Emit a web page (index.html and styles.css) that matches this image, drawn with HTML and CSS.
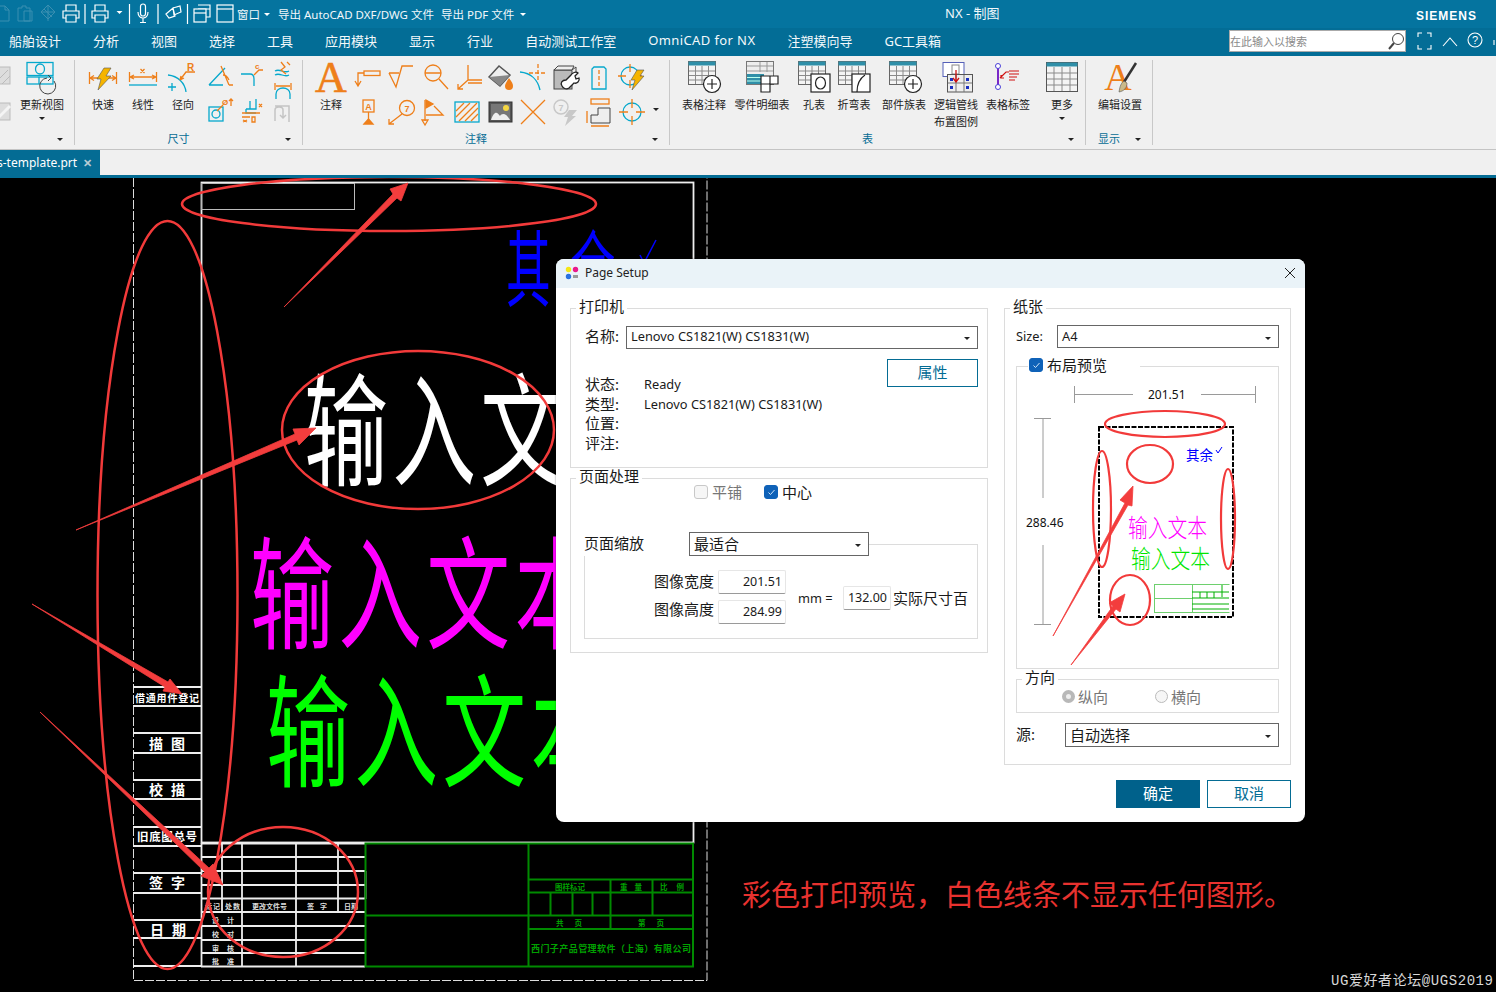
FILE: index.html
```html
<!DOCTYPE html>
<html lang="zh-CN">
<head>
<meta charset="utf-8">
<title>NX - 制图</title>
<link rel="stylesheet" href="styles.css">
</head>
<body>
<svg class="defs" width="0" height="0" aria-hidden="true">
  <symbol id="tbl" viewBox="0 0 28 24">
    <rect x=".5" y=".5" width="27" height="23" fill="#f4f4f4" stroke="#666"/>
    <rect x=".5" y=".5" width="27" height="4" fill="#2f8fa8"/>
    <path d="M7.5 5v18M14 5v18M20.5 5v18M1 10h26M1 14.500h26M1 19h26" stroke="#8a8a8a" fill="none"/>
  </symbol>
</svg>

<header class="titlebar">
  <div class="qat">
    <svg class="qat-icons" width="234" height="28" viewBox="0 0 234 28">
      <g class="q-faded">
        <path d="M-2 6h7l4 4v11H-2zM5 6v4h4"/>
        <path d="M18 8h4v-2h4v2h4v13H18zM24 11h8v10h-8z"/>
        <path d="M48 5l7 7-7 7-7-7zM44 9l8 8M48 5v16M41 12h14"/>
      </g>
      <g class="q-line">
        <path d="M66 11V5h10v6M66 18h-3v-7h16v7h-3M66 15h10v7H66z"/>
        <path d="M85 4v20M129.500 4v20M158 4v20M187.500 4v20"/>
        <path d="M95 11V5h10v6M95 18h-3v-7h16v7h-3M95 15h10v7H95z"/>
        <rect x="140.500" y="4" width="5" height="12" rx="2.500"/>
        <path d="M138 12c0 8 10 8 10 0M143 18v4M140 22.500h6"/>
        <path d="M173 8l7-2 1 6-7 3zM166 14l7-6 2 8-6 2z"/>
        <path d="M198 5h12v12h-4M198 9h12"/>
        <rect x="194" y="9" width="12" height="13" fill="#05749f"/>
        <path d="M194 13h12"/>
        <rect x="217" y="5" width="16" height="17"/>
        <path d="M217 9h16"/>
      </g>
      <path class="q-fill" d="M116.500 11h6l-3 3z"/>
    </svg>
    <span class="qat-text">窗口</span><i class="caret caret-w"></i>
    <span class="qat-text qat-export">导出 AutoCAD DXF/DWG 文件</span>
    <span class="qat-text qat-export2">导出 PDF 文件</span><i class="caret caret-w caret-lined"></i>
  </div>
  <div class="app-title">NX - 制图</div>
  <div class="brand">SIEMENS</div>
</header>

<nav class="menubar">
  <span>船舶设计</span><span>分析</span><span>视图</span><span>选择</span><span>工具</span><span>应用模块</span><span>显示</span><span>行业</span><span>自动测试工作室</span><span class="menu-latin">OmniCAD for NX</span><span>注塑模向导</span><span>GC工具箱</span>
  <div class="searchbox">
    <span class="search-hint">在此输入以搜索</span>
    <svg width="18" height="20" viewBox="0 0 18 20"><circle cx="11" cy="8" r="5.500" fill="none" stroke="#444"/><path d="M7 12l-5 6" stroke="#444" stroke-width="2"/></svg>
  </div>
  <svg class="menu-tools" width="80" height="28" viewBox="0 0 80 28">
    <path d="M2 10V6h4M11 6h4v4M2 18v4h4M11 22h4v-4M27 19l7-8 7 8"/>
    <circle cx="59" cy="13" r="7"/>
    <text x="59" y="17" class="help">?</text>
    <path d="M78 18v-5"/>
  </svg>
</nav>

<section class="ribbon">
  <div class="group g0">
    <div class="group-body">
      <div class="faded-col">
        <svg width="14" height="20" viewBox="0 0 14 20"><rect x="-6" y="1" width="16" height="17" fill="#ddd" stroke="#bbb"/><path d="M-2 14L8 4M2 18L10 10" stroke="#bbb" fill="none"/></svg>
        <svg width="14" height="20" viewBox="0 0 14 20"><rect x="-6" y="1" width="16" height="17" fill="#ddd" stroke="#bbb"/><path d="M-2 16L10 4" stroke="#f4f4f4" stroke-width="3" fill="none"/></svg>
      </div>
      <div class="tool w52">
        <svg class="ic" viewBox="0 0 36 36">
          <g class="c"><rect x="3" y="2.500" width="26" height="13"/><ellipse cx="16" cy="9" rx="4.500" ry="5"/><rect x="3" y="17" width="26" height="7"/><path d="M15 17v7"/></g>
          <path d="M30 21a8 8 0 1 1-7-3" fill="none" stroke="#444"/><path d="M24 15l3 3-3 3" fill="none" stroke="#444"/>
        </svg>
        <span class="lbl">更新视图</span><i class="caret"></i>
      </div>
    </div>
    <div class="group-foot"><span></span><i class="caret"></i></div>
  </div>

  <div class="group g1">
    <div class="group-body">
      <div class="tool w40">
        <svg class="ic" viewBox="0 0 36 36">
          <g class="o"><path d="M4.500 12v12M31.500 12v12M5 18h26M5 18l4-2.500M5 18l4 2.500M31 18l-4-2.500M31 18l-4 2.500"/></g>
          <path class="bolt" d="M19 8h7l-5 8h5L13 30l3-11h-4z"/>
        </svg>
        <span class="lbl">快速</span>
      </div>
      <div class="tool w40">
        <svg class="ic" viewBox="0 0 36 36">
          <g class="o"><path d="M4.500 12v10M31.500 12v10M5 17h26M5 17l4-2M5 17l4 2M31 17l-4-2M31 17l-4 2M15.500 9l4 4M19.500 9l-4 4"/></g>
          <path class="c" d="M4 25h28" />
        </svg>
        <span class="lbl">线性</span>
      </div>
      <div class="tool w40">
        <svg class="ic" viewBox="0 0 36 36">
          <path class="c" d="M3 15c10 1 17 8 18 17M7 23v8M3 27h8"/>
          <g class="o"><path d="M15 20l6-8h9M15 20l1-4M15 20l4-2"/></g>
          <text x="22" y="11" class="t-o">R</text>
        </svg>
        <span class="lbl">径向</span>
      </div>
      <div class="stack s1">
        <svg width="28" height="30" viewBox="0 0 28 30"><path class="c" d="M2 24L18 7M2 24h14"/><path class="o" d="M14 5l8 19M22 24h4M16 14c3 0 5 3 6 5"/></svg>
        <svg width="28" height="26" viewBox="0 0 28 26"><rect class="c" x="2" y="10" width="14" height="14"/><circle class="c" cx="9" cy="17" r="4"/><path class="o" d="M10 14l6-6M24 2v7M22 4l2-2 2 2"/><text x="15" y="8" class="t-o t-s">Ø</text></svg>
      </div>
      <div class="stack s2">
        <svg width="24" height="30" viewBox="0 0 24 30"><path class="c" d="M1 13h9c3 0 4 2 4 5v7"/><path class="o" d="M14 14l5-5h4"/><text x="15" y="8" class="t-o t-s">c</text></svg>
        <svg width="24" height="26" viewBox="0 0 24 26"><path class="c" d="M6 12h10v-10M6 12v4h10M10 4v8"/><path class="o" d="M2 16h18M2 20h8M3 23l4 2M7 23l-4 2M12 20h3v5h-3zM19 7l3 3M22 7l-3 3"/></svg>
      </div>
      <div class="stack s3">
        <svg width="22" height="22" viewBox="0 0 22 22"><path class="c" d="M3 12c5-3 9 3 14 0M3 16c5-3 9 3 14 0"/><path class="o" d="M9 3l4 5-4 3 5 4M15 3l3 3"/></svg>
        <svg width="22" height="22" viewBox="0 0 22 22"><path class="c" d="M4 18v-5c0-8 14-8 14 0v5"/><path class="o" d="M3 2v7M19 2v7M4 5h14"/></svg>
        <svg width="22" height="22" viewBox="0 0 22 22"><path d="M3 18V7c0-4 8-4 8 0v8M8 12l3 3 3-3M3 3h14v16" fill="none" stroke="#c4c4c4" stroke-width="1.500"/></svg>
      </div>
    </div>
    <div class="group-foot"><span class="foot-label">尺寸</span><i class="caret"></i></div>
  </div>

  <div class="group g2">
    <div class="group-body">
      <div class="tool w40">
        <svg class="ic" viewBox="0 0 36 36"><text x="18" y="32" class="big-a">A</text></svg>
        <span class="lbl">注释</span>
      </div>
      <div class="ann-grid">
        <svg viewBox="0 0 30 30"><g class="o"><rect x="11" y="9" width="16" height="4.500"/><path d="M11 11H5v12M2 19l3 5 3-5"/></g></svg>
        <svg viewBox="0 0 30 30"><g class="o"><path d="M3 11h10M3 11l7 14 6-21h11"/></g></svg>
        <svg viewBox="0 0 30 30"><g class="o"><circle cx="14" cy="11" r="8"/><path d="M6 11h16M20 17l9 10"/></g></svg>
        <svg viewBox="0 0 30 30"><g class="o"><path d="M16 3v15h14M16 21h14M16 18L6 27M6 22v5h5"/></g></svg>
        <svg viewBox="0 0 30 30"><path d="M4 15L14 4l11 9-10 11z" fill="#eee" stroke="#555" stroke-width="1.500"/><path d="M4 15l11 9 10-11z" fill="#888"/><path d="M24 16c3 4 4 6 4 8a4 4 0 0 1-8 0c0-2 2-5 4-8z" fill="#ee7f1a"/></svg>
        <svg viewBox="0 0 30 30"><path class="c" d="M2 10c11 1 18 8 20 18"/><path class="o od" d="M20 2v18M11 11h18"/></svg>
        <svg viewBox="0 0 30 30"><rect x="3" y="8" width="18" height="19" fill="#bbb" stroke="#444"/><path d="M3 8l4-4h16l-2 4zM21 8l4-3v6" fill="#eee" stroke="#444"/><path d="M11 24c-2-3 0-6 4-6l5-5c1-2 5-4 7-2l-3 3 1 3 3-1c1 3-2 6-5 5l-5 5c-3 2-6 0-7-2z" fill="#fff" stroke="#222" stroke-width="1.300"/></svg>
        <svg viewBox="0 0 30 30"><path class="c" d="M10 5h10l2 2v20H8V7z"/><path class="o od" d="M15 8v18"/></svg>
        <svg viewBox="0 0 30 30"><circle class="c" cx="13" cy="14" r="9"/><path class="o" d="M13 2v8M13 18v8M1 14h8M17 14h8"/><path class="bolt" d="M20 8h7l-4 6h4L15 28l3-10h-4z"/></svg>

        <svg viewBox="0 0 30 30"><g class="o"><rect x="10" y="3" width="11" height="12"/><path d="M15.500 15v10"/><path d="M11 27l4.500-5 4.500 5z" fill="#ee7f1a"/></g><text x="15.500" y="12.500" class="t-o t-m">A</text></svg>
        <svg viewBox="0 0 30 30"><g class="o"><circle cx="21" cy="11" r="7.500"/><path d="M16 17L3 27M3 22v5h5"/></g><text x="21" y="15" class="t-o t-m">7</text></svg>
        <svg viewBox="0 0 30 30"><g class="o"><path d="M6 3v21M6 28l-3-5h6z"/><path d="M7 3l7 4-7 4z" fill="#ee7f1a"/><path d="M15 9l9 9H7"/></g></svg>
        <svg viewBox="0 0 30 30"><rect class="c" x="3" y="5" width="24" height="20"/><path class="o" d="M4 14l8-8M4 20l14-14M7 24L25 6M13 24l13-13M19 24l7-7"/></svg>
        <svg viewBox="0 0 30 30"><rect x="4" y="5" width="23" height="20" fill="#555" stroke="#333"/><rect x="6" y="7" width="19" height="16" fill="#777"/><circle cx="21" cy="11" r="3" fill="#f5d742"/><path d="M6 23c3-9 6-9 9-4 2-3 6-3 10 4z" fill="#eee"/></svg>
        <svg viewBox="0 0 30 30"><path class="o" d="M3 3l24 24M27 3L3 27"/></svg>
        <svg viewBox="0 0 30 30"><circle cx="10" cy="10" r="7" fill="none" stroke="#c8c8c8" stroke-width="1.500"/><text x="10" y="14" class="t-g">7</text><path d="M18 13h8l-5 6h4L14 29l3-9h-4z" fill="#c8c8c8"/></svg>
        <svg viewBox="0 0 30 30"><rect class="o" x="7" y="2" width="18" height="5"/><path d="M14 11h12v15H7v-8h7z" fill="#eee" stroke="#444"/><path class="o" d="M3 14v12M7 29h18"/></svg>
        <svg viewBox="0 0 30 30"><circle class="c" cx="15" cy="15" r="9"/><path class="o" d="M15 2v9M15 19v9M2 15h9M19 15h9"/></svg>
      </div>
      <i class="caret caret-more"></i>
    </div>
    <div class="group-foot"><span class="foot-label">注释</span><i class="caret"></i></div>
  </div>

  <div class="group g3">
    <div class="group-body">
      <div class="tool w52">
        <svg class="ic" viewBox="0 0 36 36"><use href="#tbl" x="2" y="1" width="28" height="24"/><circle class="k" cx="26" cy="24" r="8.500"/><path class="kp" d="M26 19v10M21 24h10"/></svg>
        <span class="lbl">表格注释</span>
      </div>
      <div class="tool w64">
        <svg class="ic" viewBox="0 0 36 36"><rect x="2.500" y="1.500" width="27" height="23" fill="#eee" stroke="#777"/><path d="M3 6h26M3 11h26M16 2v10M23 2v10" stroke="#999"/><rect x="3" y="14" width="17" height="10" fill="#2f8fa8"/><path d="M3 17.500h17M3 21h17" stroke="#bfe"/><path class="k" d="M17 16h17v8h-8v8h-9z"/><path class="kp" d="M26 16v8H17"/></svg>
        <span class="lbl">零件明细表</span>
      </div>
      <div class="tool w40">
        <svg class="ic" viewBox="0 0 36 36"><use href="#tbl" x="2" y="1" width="28" height="24"/><rect class="k" x="15" y="14" width="19" height="18"/><ellipse class="kp" cx="24.500" cy="23" rx="5" ry="6"/></svg>
        <span class="lbl">孔表</span>
      </div>
      <div class="tool w40">
        <svg class="ic" viewBox="0 0 36 36"><use href="#tbl" x="2" y="1" width="28" height="24"/><rect class="k" x="16" y="14" width="18" height="18"/><path class="kp" d="M21 32c0-8 2-13 8-17"/></svg>
        <span class="lbl">折弯表</span>
      </div>
      <div class="tool w60">
        <svg class="ic" viewBox="0 0 36 36"><use href="#tbl" x="3" y="1" width="28" height="24"/><circle class="k" cx="27" cy="24" r="8.500"/><path class="kp" d="M27 19v10M22 24h10"/></svg>
        <span class="lbl">部件族表</span>
      </div>
      <div class="tool w44">
        <svg class="ic" viewBox="0 0 36 36"><rect x="5" y="2.500" width="21" height="14" fill="#fff" stroke="#5560b8"/><rect x="14" y="5" width="7" height="9" fill="#fff" stroke="#888"/><rect x="9.500" y="14.500" width="25" height="17.500" fill="#eee" stroke="#555"/><path d="M18 15v17M26 15v17M10 23h24" stroke="#777"/><path d="M12 18h3v3h-3zM28 18h3v3h-3zM12 26h3v3h-3zM28 26h3v3h-3z" fill="#1a2fc0"/><path d="M18 10v11M15 18l3 4 3-4" fill="none" stroke="#d01010" stroke-width="1.300"/></svg>
        <span class="lbl">逻辑管线<br>布置图例</span>
      </div>
      <div class="tool w60">
        <svg class="ic" viewBox="0 0 36 36"><path d="M8 6v21" stroke="#7a28c8" stroke-width="2"/><circle cx="8" cy="6" r="2.500" fill="#fff" stroke="#4a40d8"/><circle cx="8" cy="27" r="2.500" fill="#fff" stroke="#4a40d8"/><path d="M10 18l6-6h3M11 15v3h3M19 11h10M19 14h10M19 17h8M19 20h6" fill="none" stroke="#d01010" stroke-width="1.200"/></svg>
        <span class="lbl">表格标签</span>
      </div>
      <div class="tool w48">
        <svg class="ic" viewBox="0 0 36 36"><rect x="2.500" y="2.500" width="31" height="29" fill="#f4f4f4" stroke="#555"/><rect x="2.500" y="2.500" width="31" height="4" fill="#2f8fa8"/><path d="M10 7v24M18 7v24M26 7v24M3 13h30M3 19h30M3 25h30" stroke="#8a8a8a"/></svg>
        <span class="lbl">更多</span><i class="caret"></i>
      </div>
    </div>
    <div class="group-foot"><span class="foot-label">表</span><i class="caret"></i></div>
  </div>

  <div class="group g4">
    <div class="group-body">
      <div class="tool w60">
        <svg class="ic" viewBox="0 0 36 36"><text x="16" y="30" class="big-a big-b">A</text><path d="M34 3L22 22" stroke="#333" stroke-width="2.500"/><path d="M22 21c-3 2-4 5-5 11 5-1 8-4 8-9z" fill="#c9b98a" stroke="#555" stroke-width=".6"/></svg>
        <span class="lbl">编辑设置</span>
      </div>
    </div>
    <div class="group-foot"><span class="foot-label">显示</span><i class="caret"></i></div>
  </div>
</section>

<div class="tabbar">
  <div class="tab"><span class="tab-name">s-template.prt</span><span class="tab-x">✕</span></div>
</div>
<div class="tabline"></div>

<main class="canvas">
  <svg class="drawing" width="1496" height="814" viewBox="0 178 1496 814">
    <path class="dash" d="M133.500 178V980.500H707V178"/>
    <g class="sheet">
      <rect x="201.500" y="182.500" width="492" height="660"/>
      <path d="M201.500 843V967"/>
      <rect class="thin" x="201.500" y="183.500" width="153" height="26"/>
      <path d="M133 687h68M133 706h68M133 733h68M133 753h68M133 780h68M133 799h68M133 827h68M133 846h68M133 873h68M133 893h68M133 920h68M133 938h68M133 966h68"/>
      <path d="M201 843.500h164.500M201 857h164M201 871h164.500M201 885h164.500M201 898.500h164.500M201 912h164M201 926h164M201 940h164M201 953h164M201 966.500h164M222 843v69M242 843v123M296 843v123M338 843v69M365.500 871v28"/>
    </g>
    <g class="sheet-text">
      <text class="st-xs" x="135" y="702" textLength="64" lengthAdjust="spacing">借通用件登记</text>
      <text x="149" y="749" textLength="36" lengthAdjust="spacing">描图</text>
      <text x="149" y="795" textLength="36" lengthAdjust="spacing">校描</text>
      <text class="st-s" x="137" y="841" textLength="60" lengthAdjust="spacing">旧底图总号</text>
      <text x="149" y="888" textLength="36" lengthAdjust="spacing">签字</text>
      <text x="150" y="935" textLength="36" lengthAdjust="spacing">日期</text>
    </g>
    <g class="sheet-small">
      <text x="205" y="909" textLength="15" lengthAdjust="spacing">标记</text><text x="225" y="909" textLength="15" lengthAdjust="spacing">处数</text><text x="252" y="909" textLength="35" lengthAdjust="spacing">更改文件号</text><text x="307" y="909" textLength="20" lengthAdjust="spacing">签字</text><text x="344" y="909" textLength="14" lengthAdjust="spacing">日期</text>
      <text x="212" y="923" textLength="22" lengthAdjust="spacing">设计</text><text x="212" y="937" textLength="22" lengthAdjust="spacing">校对</text><text x="212" y="951" textLength="22" lengthAdjust="spacing">审核</text><text x="212" y="964" textLength="22" lengthAdjust="spacing">批准</text>
    </g>
    <g class="gsheet">
      <rect x="365.500" y="843.500" width="327.500" height="123"/>
      <path d="M528.500 843v123M365 915.500h328M528 879.500h165M528 892.500h165M528 929h165M610.500 879v50M652.500 879v36M550.500 892v23M572.500 892v23M592.500 892v23"/>
    </g>
    <g class="gsheet-text">
      <text x="555" y="890" textLength="30" lengthAdjust="spacing">图样标记</text><text x="620" y="890" textLength="22" lengthAdjust="spacing">重量</text><text x="660" y="890" textLength="24" lengthAdjust="spacing">比例</text>
      <text x="556" y="926" textLength="26" lengthAdjust="spacing">共页</text><text x="638" y="926" textLength="26" lengthAdjust="spacing">第页</text>
      <text x="531" y="952" textLength="160" lengthAdjust="spacing" class="gbold">西门子产品管理软件（上海）有限公司</text>
    </g>
    <text class="bigtxt blue" transform="translate(506 300) scale(.62 1.16)" font-size="72" letter-spacing="32">其余</text>
    <path class="bluecheck" d="M640 255l4 8 12-23"/>
    <text class="bigtxt white" transform="translate(304 475.500) scale(.84 1.22)" font-size="100" letter-spacing="5">输入文本</text>
    <text class="bigtxt magenta" transform="translate(250 638.500) scale(.84 1.22)" font-size="100" letter-spacing="5">输入文本</text>
    <text class="bigtxt green" transform="translate(266 776.500) scale(.84 1.22)" font-size="100" letter-spacing="5">输入文本</text>
    <g class="red-ring">
      <ellipse cx="389" cy="204" rx="207" ry="27"/>
      <ellipse cx="167.500" cy="595" rx="70" ry="374"/>
      <ellipse cx="418" cy="430" rx="136" ry="79"/>
      <ellipse cx="283" cy="892" rx="75" ry="65"/>
    </g>
    <g class="red-arrow">
      <polygon points="284,307 393,194 390,189 408,183 401,201 397,198"/>
      <polygon points="76,530 295,434 293,429 316,428 299,445 297,440"/>
      <polygon points="32,604 168,682 170,679 182,694 163,691 165,687"/>
      <polygon points="40,712 209,868 213,864 223,885 201,876 205,872"/>
    </g>
    <text class="caption" x="742" y="906" textLength="551" lengthAdjust="spacing">彩色打印预览，白色线条不显示任何图形。</text>
    <text class="wm" x="1331" y="985" textLength="162">UG爱好者论坛@UGS2019</text>
  </svg>

  <section class="dialog">
    <div class="dlg-title">
      <svg width="14" height="14" viewBox="0 0 14 14"><circle cx="3.500" cy="3.500" r="2.700" fill="#f5e616"/><circle cx="10.500" cy="3.500" r="2.700" fill="#ea1a8c"/><circle cx="3.500" cy="10.500" r="2.700" fill="#2a72e0"/><rect x="8" y="9" width="5" height="3" fill="#999"/></svg>
      <span class="dlg-name">Page Setup</span>
      <svg class="dlg-close" width="12" height="12" viewBox="0 0 12 12"><path d="M1 1l10 10M11 1L1 11" stroke="#222" fill="none"/></svg>
    </div>
    <div class="dlg-body">
      <div class="col-left">
        <fieldset class="fs fs-printer">
          <legend>打印机</legend>
          <div class="row">
            <label class="row-label">名称:</label>
            <div class="select sel-printer"><span>Lenovo CS1821(W) CS1831(W)</span><i class="caret"></i></div>
          </div>
          <div class="printer-info">
            <dl class="info">
              <dt>状态:</dt><dd>Ready</dd>
              <dt>类型:</dt><dd>Lenovo CS1821(W) CS1831(W)</dd>
              <dt>位置:</dt><dd></dd>
              <dt>评注:</dt><dd></dd>
            </dl>
            <button class="btn btn-outline btn-prop" type="button">属性</button>
          </div>
        </fieldset>
        <fieldset class="fs fs-page">
          <legend>页面处理</legend>
          <div class="checks">
            <label class="check check-off"><i class="box"></i>平铺</label>
            <label class="check"><i class="box on"><svg width="9" height="9" viewBox="0 0 9 9"><path d="M1.500 4.500l2 2 4-4.500" fill="none" stroke="#cfe3f7"/></svg></i>中心</label>
          </div>
          <fieldset class="fs fs-scale">
            <legend class="scale-legend"><span class="scale-name">页面缩放</span><div class="select sel-scale"><span>最适合</span><i class="caret"></i></div></legend>
            <div class="scale-body">
              <div class="size-grid">
                <span class="lab-w">图像宽度</span><div class="numbox nb-wide">201.51</div>
                <span class="lab-h">图像高度</span><div class="numbox nb-wide">284.99</div>
              </div>
              <div class="pct">
                <span class="mm">mm =</span><div class="numbox nb-pct">132.00</div><span>实际尺寸百</span>
              </div>
            </div>
          </fieldset>
        </fieldset>
      </div>
      <fieldset class="fs fs-paper">
        <legend>纸张</legend>
        <div class="row row-size">
          <label class="row-label">Size:</label>
          <div class="select sel-size"><span>A4</span><i class="caret"></i></div>
        </div>
        <fieldset class="fs fs-preview">
          <legend class="check"><i class="box on"><svg width="9" height="9" viewBox="0 0 9 9"><path d="M1.500 4.500l2 2 4-4.500" fill="none" stroke="#cfe3f7"/></svg></i>布局预览</legend>
          <svg class="preview" width="261" height="294" viewBox="1017 374 261 294">
            <path class="dim" d="M1074.500 386v17M1255.500 386v17M1075 394.500h58M1201 394.500h54M1034 418.500h17M1034 624.500h17M1043 419v79M1043 545v79"/>
            <text class="dim-t" x="1148" y="399">201.51</text>
            <text class="dim-t" x="1026" y="527">288.46</text>
            <rect class="p-page" x="1099" y="427" width="134" height="190"/>
            <text class="pv-blue" x="1186" y="460" textLength="27" lengthAdjust="spacingAndGlyphs">其余</text>
            <path class="pv-check" d="M1216 450l2 3 4-6"/>
            <text class="pv-m" x="1128" y="537" textLength="79" lengthAdjust="spacingAndGlyphs">输入文本</text>
            <text class="pv-g" x="1131" y="568" textLength="79" lengthAdjust="spacingAndGlyphs">输入文本</text>
            <g class="pv-tb">
              <path d="M1154.500 584.500h75M1154.500 584v29M1154.500 612.500h75M1192.500 584v29M1154.500 598.500h38"/>
              <path class="pv-tb2" d="M1192 592h37M1192 598h37M1192 604h37M1192 609h37M1200 592v6M1207 592v6M1214 592v6M1222 585v12"/>
            </g>
            <g class="pv-ring">
              <ellipse cx="1165" cy="424" rx="60" ry="13"/>
              <ellipse cx="1102" cy="509" rx="9" ry="58"/>
              <ellipse cx="1228" cy="519" rx="7" ry="50"/>
              <ellipse cx="1150" cy="464" rx="23" ry="19"/>
              <ellipse cx="1130" cy="600" rx="20" ry="25"/>
            </g>
            <polygon class="pv-arrow" points="1053,636 1125,503 1120,500 1133,486 1132,506 1128,505"/>
            <polygon class="pv-arrow" points="1071,665 1113,606 1109,603 1125,594 1120,612 1116,609"/>
          </svg>
        </fieldset>
        <fieldset class="fs fs-orient">
          <legend>方向</legend>
          <div class="radios">
            <label class="radio"><i class="dot dot-on"></i>纵向</label>
            <label class="radio"><i class="dot"></i>横向</label>
          </div>
        </fieldset>
        <div class="row row-src">
          <label class="row-label">源:</label>
          <div class="select sel-src"><span>自动选择</span><i class="caret"></i></div>
        </div>
      </fieldset>
    </div>
    <div class="dlg-actions">
      <button class="btn btn-primary" type="button">确定</button>
      <button class="btn btn-outline" type="button">取消</button>
    </div>
  </section>
</main>
</body>
</html>
```

FILE: styles.css
```css
* { box-sizing: border-box; }
html, body { margin: 0; padding: 0; }
body {
  width: 1496px;
  height: 992px;
  overflow: hidden;
  background: #000;
  font-family: "Noto Sans", "Noto Sans CJK SC", sans-serif;
  color: #1a1a1a;
}
.defs { position: absolute; }

/* ---------- title bar ---------- */
.titlebar {
  height: 28px;
  background: #05749f;
  color: #f2f8fb;
  display: flex;
  align-items: center;
}
.qat {
  width: 945px;
  display: flex;
  align-items: center;
  font-size: 11.500px;
  flex: none;
}
.qat-icons { flex: none; }
.q-faded { fill: none; stroke: #3b8fb1; stroke-width: 1; }
.q-line { fill: none; stroke: #fff; stroke-width: 1.200; }
.q-fill { fill: #fff; }
.qat-text { margin-left: 3px; white-space: nowrap; }
.qat-export { margin-left: 8px; }
.qat-export2 { margin-left: 7px; }
.caret {
  display: inline-block;
  width: 0; height: 0;
  border-left: 3px solid transparent;
  border-right: 3px solid transparent;
  border-top: 3px solid #222;
}
.caret-w { border-top-color: #fff; margin-left: 4px; }
.caret-lined { margin-left: 6px; }
.app-title { font-size: 13px; white-space: nowrap; padding-bottom: 4px; }
.brand {
  margin-left: auto;
  margin-right: 19px;
  margin-top: 3px;
  font-family: "Liberation Sans", sans-serif;
  font-weight: 700;
  font-size: 12px;
  letter-spacing: 1px;
  color: #fff;
}

/* ---------- menu ---------- */
.menubar {
  height: 28px;
  background: #036d96;
  color: #f4f9fb;
  display: flex;
  align-items: center;
  gap: 32px;
  padding: 0 0 2px 9px;
  font-size: 13px;
  white-space: nowrap;
}
.menubar > span { padding-bottom: 2px; }
.menu-latin { letter-spacing: .4px; }
.searchbox {
  margin-left: auto;
  width: 177px;
  height: 22px;
  background: #fff;
  border: 1px solid #aaa;
  display: flex;
  align-items: center;
  justify-content: space-between;
  margin-right: -22px;
}
.search-hint { font-size: 11px; color: #8a8a8a; }
.menu-tools { flex: none; fill: none; stroke: #fff; stroke-width: 1.100; }
.help { fill: #fff; stroke: none; font-size: 11px; text-anchor: middle; font-family: "Liberation Sans", sans-serif; }

/* ---------- ribbon ---------- */
.ribbon {
  height: 94px;
  background: #f0f0f0;
  border-bottom: 1px solid #c4c4c4;
  display: flex;
  overflow: hidden;
}
.group {
  display: flex;
  flex-direction: column;
  position: relative;
  flex: none;
  padding-bottom: 3px;
}
.group::after {
  content: "";
  position: absolute;
  right: 0; top: 4px; bottom: 4px;
  width: 1px;
  background: #c8c8c8;
}
.g0 { width: 75px; }
.g1 { width: 228px; }
.g2 { width: 367px; }
.g3 { width: 416px; }
.g4 { width: 67px; }
.group-body { display: flex; height: 74px; flex: none; }
.g1 .group-body { padding-left: 8px; }
.g2 .group-body { padding-left: 8px; }
.g3 .group-body { padding-left: 8px; }
.g4 .group-body { padding-left: 4px; }
.group-foot {
  display: flex;
  align-items: center;
  flex: 1;
}
.foot-label { flex: 1; text-align: center; font-size: 11px; color: #046c94; }
.group-foot > span:first-child:empty { flex: 1; }
.group-foot .caret { margin: 3px 12px 0 3px; flex: none; }

.tool {
  display: flex;
  flex-direction: column;
  align-items: center;
  flex: none;
  padding-top: 4px;
  font-size: 11px;
  color: #222;
}
.w40 { width: 40px; }
.w44 { width: 44px; }
.w48 { width: 48px; }
.w52 { width: 52px; }
.w60 { width: 60px; }
.w64 { width: 64px; }
.ic { width: 36px; height: 36px; display: block; flex: none; overflow: visible; }
.lbl { line-height: 17px; text-align: center; white-space: nowrap; }
.tool .caret { margin-top: 4px; }
.faded-col { width: 16px; padding-top: 10px; display: flex; flex-direction: column; gap: 16px; flex: none; }
.stack { display: flex; flex-direction: column; flex: none; padding-top: 5px; }
.s1 { width: 32px; margin-left: 2px; padding-left: 2px; gap: 6px; }
.s2 { width: 30px; padding-left: 3px; gap: 6px; }
.s3 { width: 28px; padding-left: 5px; padding-top: 3px; }

.c { fill: none; stroke: #06a8cc; stroke-width: 1.300; }
.o { fill: none; stroke: #ee7f1a; stroke-width: 1.300; }
.od { stroke-dasharray: 4 2; }
.k { fill: #fff; stroke: #222; stroke-width: 1.200; }
.kp { fill: none; stroke: #222; stroke-width: 1.200; }
.bolt { fill: #f5b400; stroke: #555; stroke-width: .6; }
.t-o { fill: #ee7f1a; font: 700 10px "Liberation Sans", sans-serif; }
.t-s { font-size: 8px; }
.t-m { font-size: 9px; text-anchor: middle; }
.t-g { fill: #c8c8c8; font: 700 9px "Liberation Sans", sans-serif; text-anchor: middle; }
.big-a { fill: #ee7f1a; font: 400 44px "Liberation Serif", serif; text-anchor: middle; stroke: #ee7f1a; stroke-width: .6; }
.big-b { font-size: 38px; stroke-width: 0; }

.ann-grid {
  display: grid;
  grid-template-columns: repeat(9, 33px);
  grid-template-rows: 35px 35px;
  padding-top: 4px;
  flex: none;
}
.ann-grid svg { width: 30px; height: 30px; margin: 2px auto 0; display: block; }
.caret-more { margin: 52px 0 0 5px; flex: none; }

/* ---------- tabs ---------- */
.tabbar { height: 25px; background: #f0f0f0; display: flex; }
.tab {
  width: 100px;
  background: #046c94;
  color: #fff;
  display: flex;
  align-items: center;
  font-size: 12px;
  overflow: hidden;
  padding-bottom: 1px;
}
.tab-name { margin-left: -3px; white-space: nowrap; }
.tab-x { margin-left: 6px; font-size: 11px; font-weight: 700; color: #b8cbd4; }
.tabline { height: 3px; background: #046c94; }

/* ---------- canvas ---------- */
.canvas { position: relative; height: 814px; background: #000; overflow: hidden; }
.drawing { display: block; }
.dash { fill: none; stroke: #ddd; stroke-dasharray: 9 2; }
.sheet { fill: none; stroke: #eee; stroke-width: 1.800; }
.thin { stroke-width: 1; stroke: #bbb; }
.sheet-text { fill: #fff; font: 700 14px "Noto Sans CJK SC", sans-serif; }
.st-xs { font-size: 10px; }
.st-s { font-size: 11.500px; }
.sheet-small { fill: #ddd; font: 700 7px "Noto Sans CJK SC", sans-serif; }
.gsheet { fill: none; stroke: #008a00; stroke-width: 2; }
.gsheet-text { fill: #00a000; font: 700 7.500px "Noto Sans CJK SC", sans-serif; }
.gbold { font-size: 9px; }
.bigtxt { font-family: "Noto Sans CJK SC", sans-serif; font-weight: 400; }
.blue { fill: #0000ff; }
.white { fill: #fff; }
.magenta { fill: #ff00ff; }
.green { fill: #00ff00; }
.bluecheck { fill: none; stroke: #0000ff; stroke-width: 1.500; }
.red-ring ellipse { fill: none; stroke: #f23a3a; stroke-width: 2.500; }
.red-arrow polygon { fill: #f33d3d; stroke: #f33d3d; stroke-width: .8; stroke-linejoin: round; }
.caption { fill: #e8322f; font: 400 29px "Noto Sans CJK SC", sans-serif; }
.wm { fill: #d8d8d8; font: 400 14px "Liberation Mono", "Noto Sans CJK SC", monospace; }

/* ---------- dialog ---------- */
.dialog {
  position: absolute;
  left: 556px;
  top: 81px;
  width: 749px;
  height: 563px;
  background: #fff;
  border-radius: 8px;
  overflow: hidden;
  box-shadow: 0 0 2px rgba(0,0,0,.5);
  font-size: 15px;
}
.dlg-title {
  height: 29px;
  background: #eaf3f8;
  display: flex;
  align-items: center;
  padding: 0 9px 2px 9px;
  font-size: 12px;
  color: #222;
}
.dlg-name { margin-left: 6px; }
.dlg-close { margin-left: auto; }
.dlg-body {
  display: grid;
  grid-template-columns: 418px 287px;
  column-gap: 16px;
  padding: 10px 14px 0;
}
.fs {
  margin: 0;
  padding: 0;
  min-width: 0;
  border: 1px solid #dcdcdc;
}
.fs > legend {
  padding: 0 3px;
  margin-left: 5px;
  height: 20px;
  line-height: 16px;
  font-size: 15px;
}
.fs-printer { height: 170px; }
.fs-page { height: 185px; }
.fs-paper { height: 467px; }
.row { display: flex; align-items: center; padding-left: 14px; margin-top: 7px; }
.row-label { width: 41px; flex: none; padding-bottom: 3px; }
.row-size { padding-left: 11px; }
.row-size .row-label { font-size: 12.800px; padding-bottom: 1px; }
.select {
  height: 23px;
  border: 1px solid #666;
  background: #fff;
  display: flex;
  align-items: center;
  justify-content: space-between;
  padding: 0 7px 0 4px;
  flex: none;
  font-size: 15px;
}
.select > span { padding-bottom: 2px; }
.select .caret { margin-top: 3px; }
.sel-printer, .sel-size { font-size: 12.800px; }
.sel-printer { width: 352px; }
.sel-size { width: 222px; }
.printer-info {
  display: grid;
  grid-template-columns: 1fr 91px;
  padding: 10px 9px 0 14px;
}
.info {
  margin: 16px 0 0;
  display: grid;
  grid-template-columns: 59px 1fr;
  grid-auto-rows: 19.600px;
  align-items: center;
}
.info dt { font-size: 15px; line-height: 19px; }
.info dd { margin: 0; font-size: 12.800px; white-space: nowrap; line-height: 19px; }
.btn {
  font: inherit;
  font-size: 15px;
  height: 28px;
  width: 84px;
  padding: 0 0 4px;
  background: #fff;
}
.btn-outline { border: 1px solid #046c94; color: #046c94; }
.btn-primary { border: 1px solid #00618b; background: #00618b; color: #fff; }
.btn-prop { width: 91px; }
.checks { display: flex; padding-left: 123px; margin-top: -4px; height: 16px; }
.check { display: flex; align-items: center; font-size: 15px; line-height: 16px; }
.check-off { color: #777; width: 70px; }
.box {
  width: 14px; height: 14px;
  border: 1px solid #c8c8c8;
  border-radius: 3px;
  background: #f6f6f6;
  margin-right: 4px;
  flex: none;
  display: flex;
  align-items: center;
  justify-content: center;
}
.box.on { background: #0f62b8; border-color: #0f62b8; }
.fs-scale { margin: 32px 9px 0 13px; height: 107px; }
.fs > legend.scale-legend {
  display: flex;
  height: 24px;
  padding: 0;
  margin-left: -1px;
  width: 285px;
  line-height: normal;
  align-items: center;
}
.scale-name { width: 105px; flex: none; padding-bottom: 4px; }
.sel-scale { width: 180px; height: 24px; }
.scale-body { display: flex; padding: 14px 0 0 69px; }
.size-grid {
  display: grid;
  grid-template-columns: 64px 68px;
  grid-template-rows: 24px 24px;
  row-gap: 6px;
  align-items: center;
}
.size-grid > span { line-height: 20px; }
.size-grid > .lab-w { padding-bottom: 2px; }
.size-grid > .lab-h { padding-bottom: 6px; }
.numbox {
  height: 24px;
  border: 1px solid #e6e6e6;
  border-bottom-color: #9a9a9a;
  border-radius: 2px;
  font-size: 12.500px;
  text-align: right;
  line-height: 22px;
  padding-right: 3px;
  background: #fff;
}
.pct { display: flex; align-items: center; margin: 16px 0 0 12px; height: 24px; white-space: nowrap; }
.pct > span { line-height: 20px; padding-bottom: 1px; }
.pct > .mm { width: 45px; font-size: 12.800px; flex: none; }
.nb-pct { width: 48px; margin-right: 2px; flex: none; }
.fs-preview { margin: 10px 11px 0 11px; height: 311px; }
.fs > legend.check {
  height: 16px;
  line-height: 15px;
  margin-left: 11px;
  padding: 0 33px 2px 1px;
}
.preview { display: block; }
.dim { fill: none; stroke: #9a9a9a; }
.dim-t { fill: #111; font-size: 12px; }
.p-page { fill: #fff; stroke: #000; stroke-width: 2; stroke-dasharray: 5 1.500; }
.pv-blue { fill: #0000ff; font-size: 14px; font-family: "Noto Sans CJK SC", sans-serif; }
.pv-check { fill: none; stroke: #0000ff; }
.pv-m { fill: #ff00ff; font-size: 25px; font-weight: 300; font-family: "Noto Sans CJK SC", sans-serif; }
.pv-g { fill: #00e600; font-size: 25px; font-weight: 300; font-family: "Noto Sans CJK SC", sans-serif; }
.pv-tb { fill: none; stroke: #6ed06e; }
.pv-tb2 { stroke: #00b000; }
.pv-ring ellipse { fill: none; stroke: #f23a3a; stroke-width: 2.200; }
.pv-arrow { fill: #f33d3d; stroke: #f33d3d; stroke-width: .8; stroke-linejoin: round; }
.fs-orient { margin: 0 11px; height: 44px; }
.radios { display: flex; padding-left: 45px; margin-top: -1px; }
.radio { display: flex; align-items: center; color: #777; width: 93px; height: 16px; }
.dot {
  width: 13px; height: 13px;
  border-radius: 50%;
  border: 1px solid #bbb;
  background: #f6f6f6;
  margin-right: 3px;
  flex: none;
}
.dot-on { border: 4px solid #b8b8b8; background: #eee; }
.row-src { margin-top: 10px; padding-left: 11px; }
.row-src .row-label { width: 49px; }
.sel-src { width: 214px; height: 24px; }
.dlg-actions {
  display: flex;
  justify-content: flex-end;
  gap: 7px;
  padding: 15px 14px 0;
}
```
